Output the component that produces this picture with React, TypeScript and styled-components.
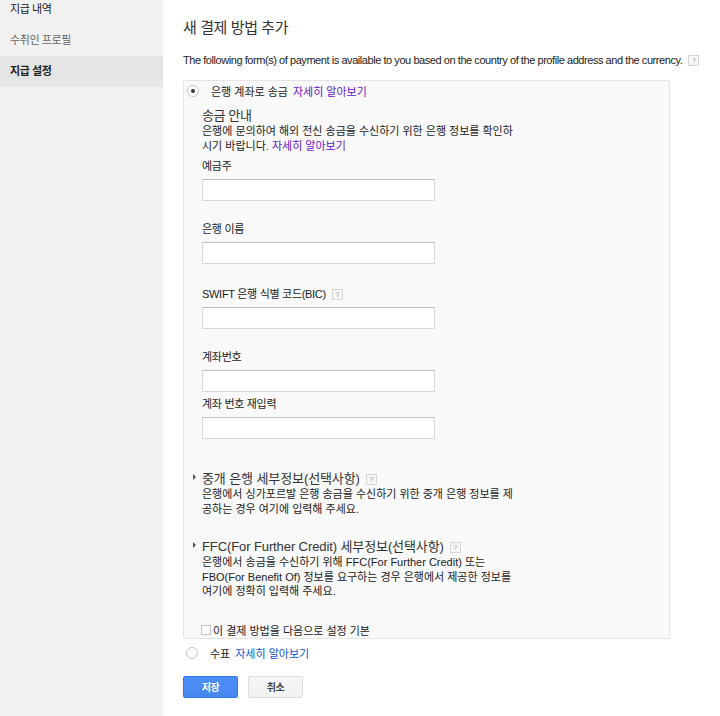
import React from 'react';
import styled, { createGlobalStyle } from 'styled-components';

const GlobalStyle = createGlobalStyle`
  html, body {
    margin: 0;
    padding: 0;
    background: #fff;
  }
  body {
    font-family: "Liberation Sans", Arial, "Noto Sans CJK KR", sans-serif;
    color: #222;
  }
`;

const Page = styled.div`
  display: flex;
  width: 720px;
  height: 716px;
  overflow: hidden;
`;

const Sidebar = styled.div`
  width: 163px;
  flex-shrink: 0;
  background: #f1f1f1;
`;

const SideList = styled.div`
  margin-top: -6px;
`;

const SideItem = styled.div<{ $active?: boolean; $muted?: boolean }>`
  height: 31px;
  line-height: 31px;
  padding-left: 10px;
  font-size: 11px;
  letter-spacing: -0.4px;
  color: ${(p) => (p.$muted ? '#666' : '#222')};
  font-weight: ${(p) => (p.$active ? 700 : 400)};
  background: ${(p) => (p.$active ? '#e5e5e5' : 'transparent')};
`;

const Main = styled.div`
  flex: 1;
  padding: 19px 0 0 20px;
`;

const Title = styled.h1`
  margin: 0;
  font-size: 15px;
  font-weight: 400;
  letter-spacing: -0.4px;
  line-height: 18px;
  color: #333;
`;

const Intro = styled.p`
  margin: 16px 0 0;
  font-size: 11px;
  letter-spacing: -0.44px;
  line-height: 14px;
  color: #222;
  display: flex;
  align-items: center;
`;

const Help = styled.span`
  display: inline-flex;
  align-items: center;
  justify-content: center;
  width: 9px;
  height: 9px;
  margin-left: 6px;
  border: 1px solid #d6d6d6;
  background: #f6f6f6;
  color: #999;
  font-size: 7px;
  line-height: 9px;
  letter-spacing: 0;
  font-weight: 400;
`;

const Box = styled.div`
  margin-top: 13px;
  width: 485px;
  background: #f9f9f9;
  border: 1px solid #e5e5e5;
  border-radius: 2px;
  padding: 0;
`;

const OptionRow = styled.div`
  display: flex;
  align-items: center;
  height: 20px;
  padding-left: 3px;
  font-size: 11px;
  letter-spacing: 0;
  color: #222;
`;

const Radio = styled.span<{ $checked?: boolean }>`
  position: relative;
  width: 12px;
  height: 12px;
  border-radius: 50%;
  border: 1px solid #c6c6c6;
  background: #fff;
  box-sizing: border-box;
  margin-right: 12px;
  flex-shrink: 0;
  &::after {
    content: '';
    display: ${(p) => (p.$checked ? 'block' : 'none')};
    position: absolute;
    left: 3px;
    top: 3px;
    width: 4px;
    height: 4px;
    border-radius: 50%;
    background: #333;
  }
`;

const Link = styled.a<{ $visited?: boolean }>`
  color: ${(p) => (p.$visited ? '#61c' : '#15c')};
  text-decoration: none;
  margin-left: 5px;
`;

const InlineLink = styled.a`
  color: #61c;
  text-decoration: none;
`;

const Inner = styled.div`
  padding-left: 18px;
`;

const Subhead = styled.div`
  margin-top: 7px;
  font-size: 13px;
  letter-spacing: -0.4px;
  line-height: 16px;
  color: #333;
`;

const Desc = styled.div`
  font-size: 11px;
  letter-spacing: 0;
  line-height: 14.5px;
  color: #222;
`;

const Field = styled.div<{ $gap: number }>`
  margin-bottom: ${(p) => p.$gap}px;
`;

const Label = styled.div`
  display: flex;
  align-items: center;
  font-size: 11px;
  letter-spacing: -0.3px;
  line-height: 14px;
  color: #222;
  margin-bottom: 6px;
`;

const Input = styled.input`
  display: block;
  box-sizing: border-box;
  width: 233px;
  height: 22px;
  margin: 0;
  padding: 0 6px;
  border: 1px solid #d9d9d9;
  border-top-color: #c0c0c0;
  background: #fff;
  border-radius: 1px;
  font-size: 12px;
  outline: none;
`;

const Section = styled.div<{ $top: number }>`
  position: relative;
  margin-top: ${(p) => p.$top}px;
`;

const SectionTitle = styled.div`
  display: flex;
  align-items: center;
  font-size: 13px;
  letter-spacing: -0.1px;
  line-height: 16px;
  color: #333;
  &::before {
    content: '';
    position: absolute;
    left: -9px;
    top: 3px;
    border-left: 3px solid #555;
    border-top: 3px solid transparent;
    border-bottom: 3px solid transparent;
  }
`;

const DefaultRow = styled.label`
  display: flex;
  align-items: center;
  margin-top: 23px;
  height: 16px;
  font-size: 11px;
  letter-spacing: 0;
  color: #222;
`;

const Checkbox = styled.span`
  width: 10px;
  height: 10px;
  box-sizing: border-box;
  border: 1px solid #c6c6c6;
  background: #fff;
  margin-left: -1px;
  margin-right: 2px;
  flex-shrink: 0;
`;

const CheckRow = styled(OptionRow)`
  margin-top: 4px;
`;

const Buttons = styled.div`
  display: flex;
  gap: 10px;
  margin-top: 13px;
`;

const Button = styled.button<{ $primary?: boolean }>`
  width: 55px;
  height: 22px;
  box-sizing: border-box;
  border-radius: 2px;
  font-family: inherit;
  font-size: 10px;
  font-weight: 700;
  letter-spacing: -0.5px;
  cursor: pointer;
  border: 1px solid ${(p) => (p.$primary ? '#3079ed' : '#dcdcdc')};
  background: ${(p) =>
    p.$primary
      ? 'linear-gradient(#4d90fe, #4787ed)'
      : 'linear-gradient(#f5f5f5, #f1f1f1)'};
  color: ${(p) => (p.$primary ? '#fff' : '#444')};
`;

const fields = [
  { label: '예금주', gap: 21 },
  { label: '은행 이름', gap: 23 },
  { label: 'SWIFT 은행 식별 코드(BIC)', gap: 21, help: true },
  { label: '계좌번호', gap: 5 },
  { label: '계좌 번호 재입력', gap: 0 },
];

export default function App() {
  return (
    <Page>
      <GlobalStyle />
      <Sidebar>
        <SideList>
          <SideItem>지급 내역</SideItem>
          <SideItem $muted>수취인 프로필</SideItem>
          <SideItem $active>지급 설정</SideItem>
        </SideList>
      </Sidebar>
      <Main>
        <Title>새 결제 방법 추가</Title>
        <Intro>
          The following form(s) of payment is available to you based on the country of the
          profile address and the currency.
          <Help>?</Help>
        </Intro>
        <Box>
          <OptionRow>
            <Radio $checked />
            은행 계좌로 송금
            <Link $visited>자세히 알아보기</Link>
          </OptionRow>
          <Inner>
            <Subhead>송금 안내</Subhead>
            <Desc>
              은행에 문의하여 해외 전신 송금을 수신하기 위한 은행 정보를 확인하
              <br />
              시기 바랍니다. <InlineLink>자세히 알아보기</InlineLink>
            </Desc>
            <div style={{ height: 6 }} />
            {fields.map((f) => (
              <Field key={f.label} $gap={f.gap}>
                <Label>
                  {f.label}
                  {f.help && <Help>?</Help>}
                </Label>
                <Input type="text" />
              </Field>
            ))}
            <Section $top={32}>
              <SectionTitle>
                중개 은행 세부정보(선택사항)
                <Help>?</Help>
              </SectionTitle>
              <Desc>
                은행에서 싱가포르발 은행 송금을 수신하기 위한 중개 은행 정보를 제
                <br />
                공하는 경우 여기에 입력해 주세요.
              </Desc>
            </Section>
            <Section $top={23}>
              <SectionTitle>
                FFC(For Further Credit) 세부정보(선택사항)
                <Help>?</Help>
              </SectionTitle>
              <Desc>
                은행에서 송금을 수신하기 위해 FFC(For Further Credit) 또는
                <br />
                FBO(For Benefit Of) 정보를 요구하는 경우 은행에서 제공한 정보를
                <br />
                여기에 정확히 입력해 주세요.
              </Desc>
            </Section>
            <DefaultRow>
              <Checkbox />
              이 결제 방법을 다음으로 설정 기본
            </DefaultRow>
          </Inner>
        </Box>
        <CheckRow>
          <Radio />
          수표
          <Link>자세히 알아보기</Link>
        </CheckRow>
        <Buttons>
          <Button $primary>저장</Button>
          <Button>취소</Button>
        </Buttons>
      </Main>
    </Page>
  );
}
